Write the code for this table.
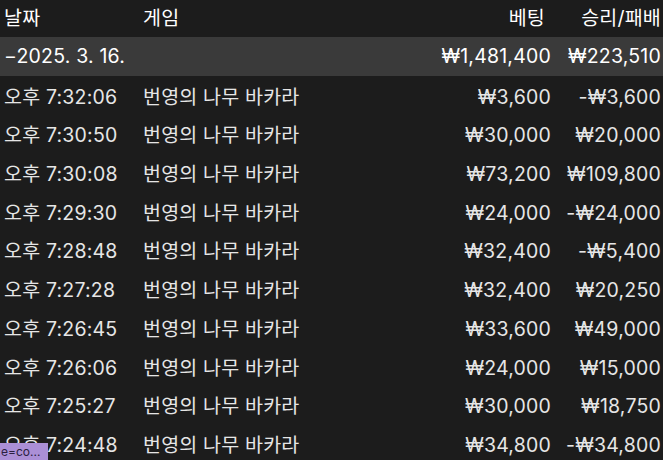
const rows = [
  ["오후 7:32:06", "₩3,600", "-₩3,600"],
  ["오후 7:30:50", "₩30,000", "₩20,000"],
  ["오후 7:30:08", "₩73,200", "₩109,800"],
  ["오후 7:29:30", "₩24,000", "-₩24,000"],
  ["오후 7:28:48", "₩32,400", "-₩5,400"],
  ["오후 7:27:28", "₩32,400", "₩20,250"],
  ["오후 7:26:45", "₩33,600", "₩49,000"],
  ["오후 7:26:06", "₩24,000", "₩15,000"],
  ["오후 7:25:27", "₩30,000", "₩18,750"],
  ["오후 7:24:48", "₩34,800", "-₩34,800"],
];

const cols = "grid grid-cols-[139px_1fr_auto_110px] items-center pl-[4px] pr-[2px]";

export default function App() {
  return (
    <div
      className="relative w-[663px] h-[460px] overflow-hidden bg-[#1c1c1c] text-[19.5px] tracking-[0.2px] text-[#e6e6e6]"
      style={{ fontFamily: 'Inter, "Noto Sans CJK KR", sans-serif' }}
    >
      <div className={`${cols} h-[37px] text-white`}>
        <div>날짜</div>
        <div>게임</div>
        <div className="text-right pr-[6px]">베팅</div>
        <div className="text-right">승리/패배</div>
      </div>
      <div className={`${cols} h-[39px] bg-[#3a3a3a] text-white`}>
        <div className="col-span-2">−2025. 3. 16.</div>
        <div className="text-right">₩1,481,400</div>
        <div className="text-right">₩223,510</div>
      </div>
      <div className="pt-[2px]">
        {rows.map((r) => (
          <div key={r[0]} className={`${cols} h-[38.7px]`}>
            <div>{r[0]}</div>
            <div>번영의 나무 바카라</div>
            <div className="text-right">{r[1]}</div>
            <div className="text-right">{r[2]}</div>
          </div>
        ))}
      </div>
      <div className="absolute left-0 bottom-0 h-[17px] w-[48px] pl-[1px] overflow-hidden bg-[#ab8fd6] text-[12px] leading-[17px] tracking-normal text-[#2a2040]">
        e=co...
      </div>
    </div>
  );
}
